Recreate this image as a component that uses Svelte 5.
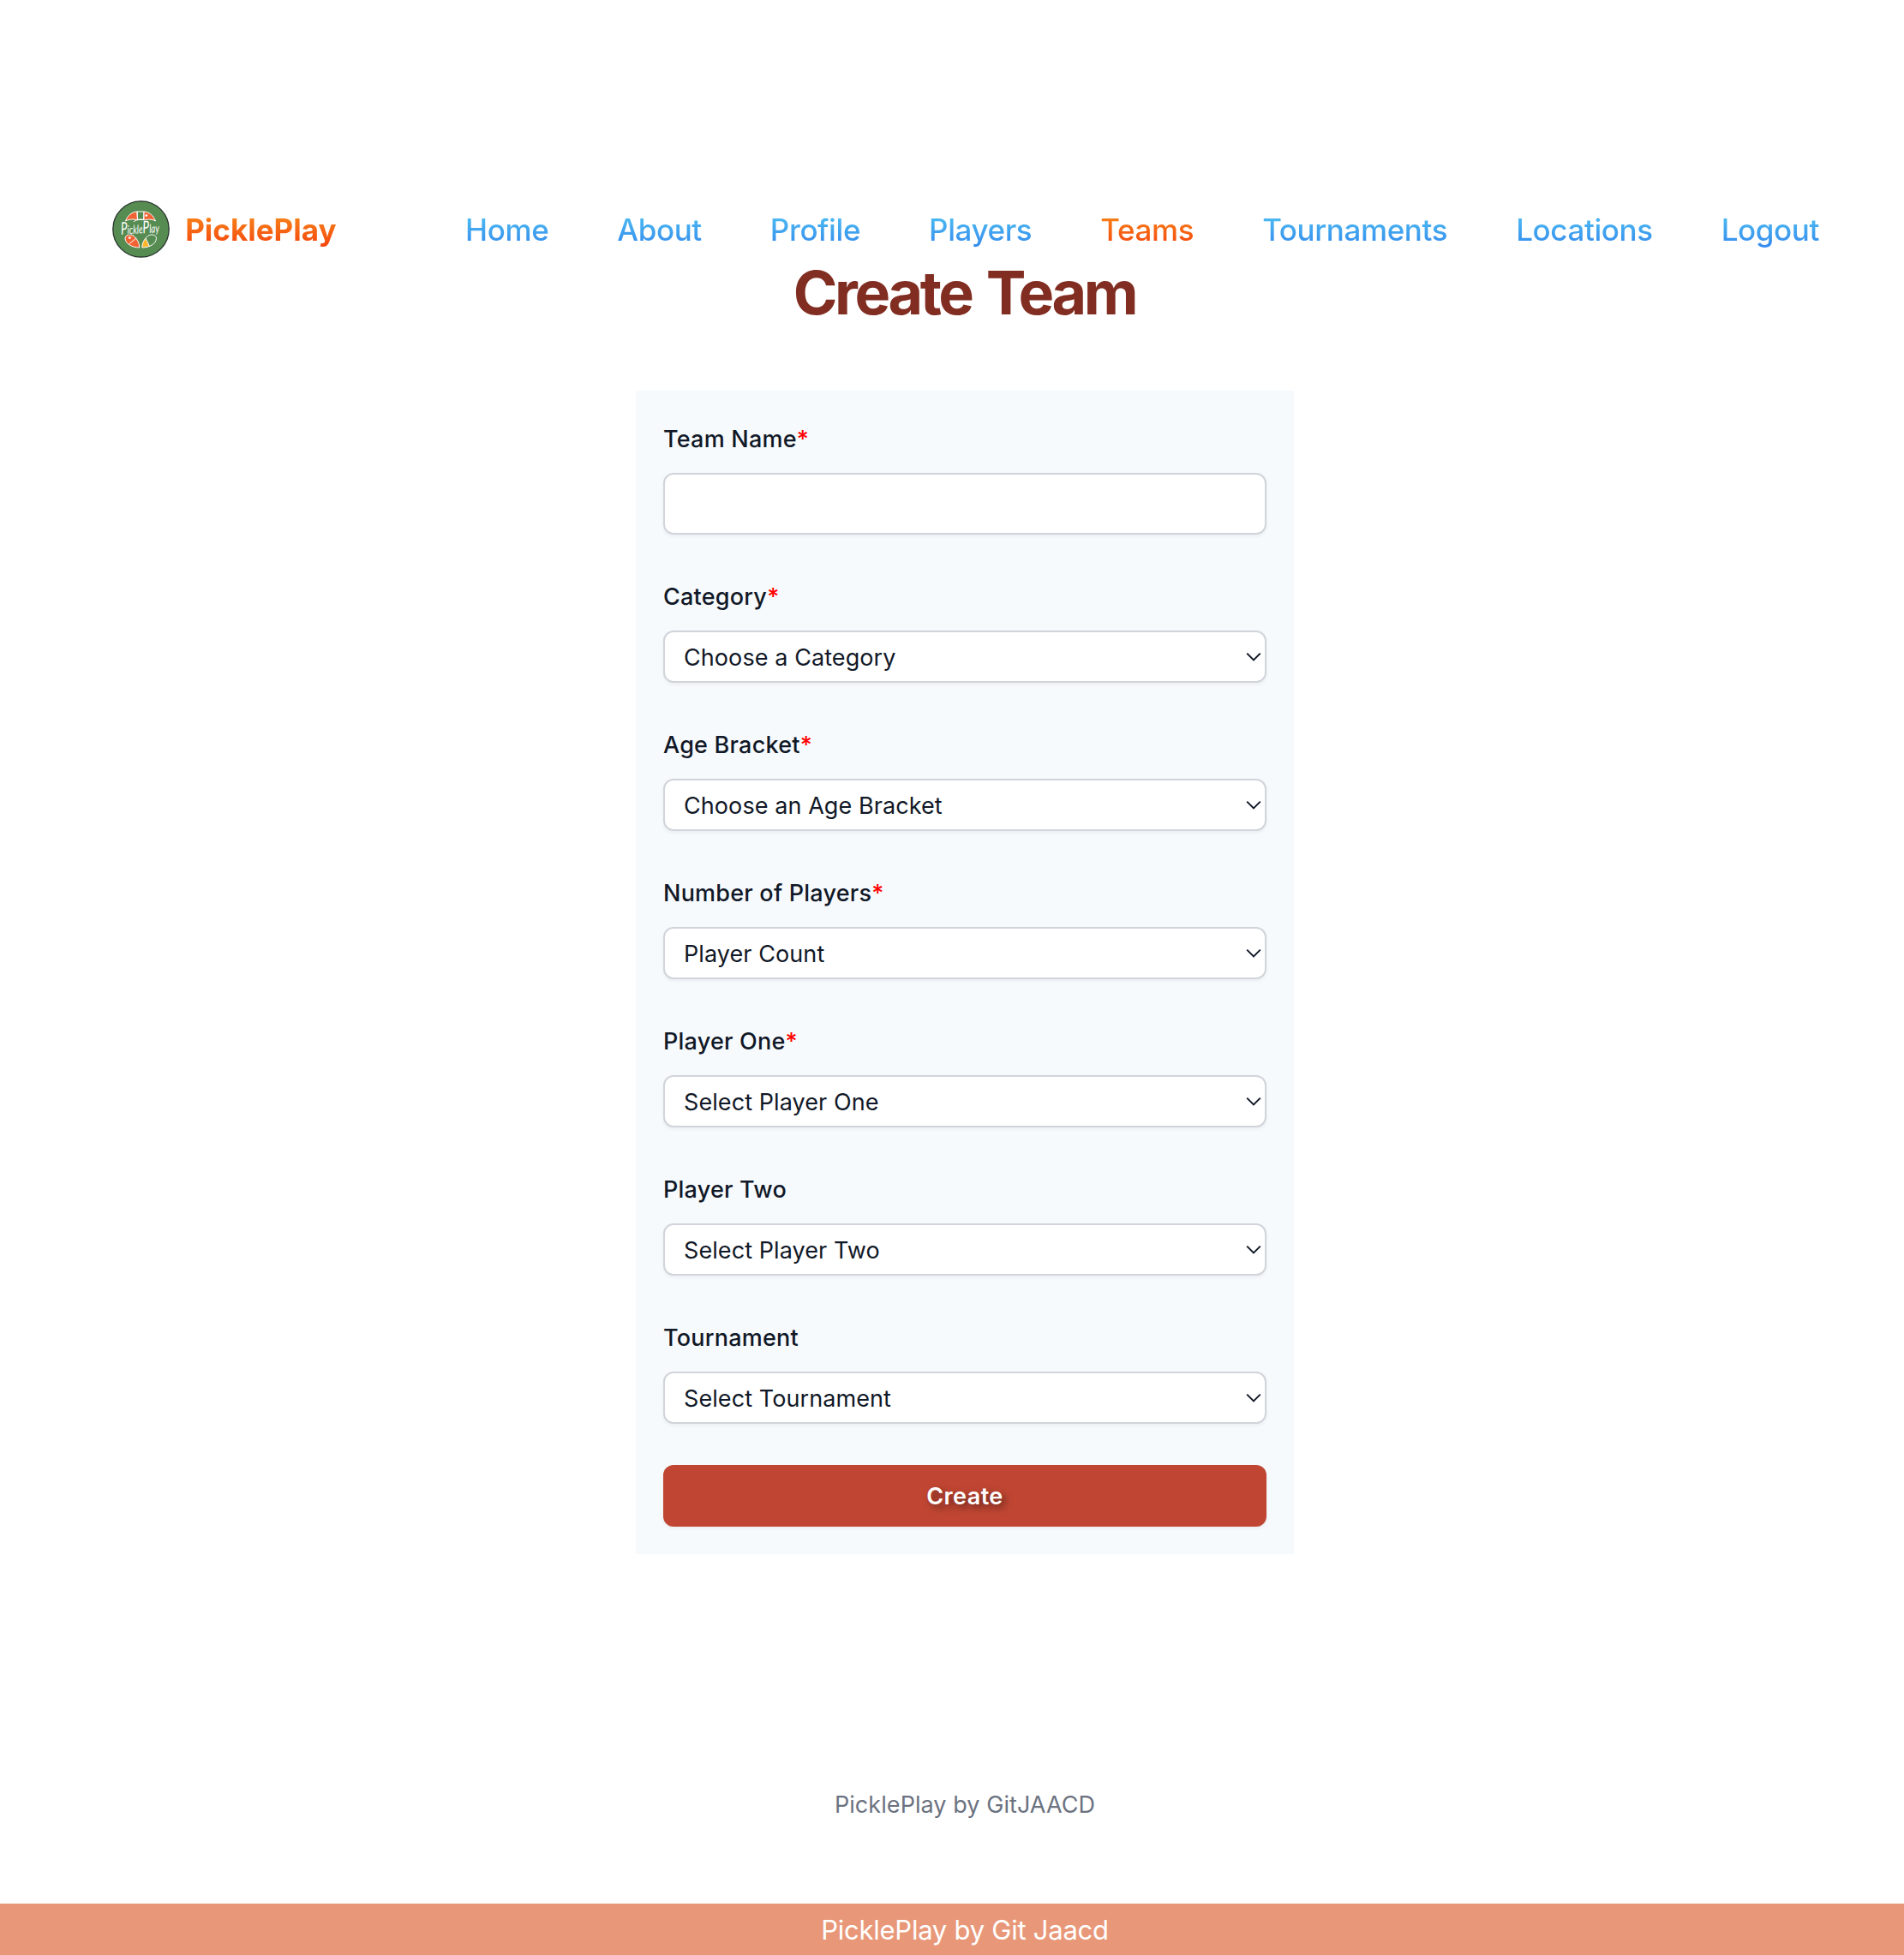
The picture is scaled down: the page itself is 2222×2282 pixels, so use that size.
<script>
  const links = ['Home', 'About', 'Profile', 'Players', 'Teams', 'Tournaments', 'Locations', 'Logout'];
  const fields = [
    { label: 'Category', required: true, value: 'Choose a Category' },
    { label: 'Age Bracket', required: true, value: 'Choose an Age Bracket' },
    { label: 'Number of Players', required: true, value: 'Player Count' },
    { label: 'Player One', required: true, value: 'Select Player One' },
    { label: 'Player Two', required: false, value: 'Select Player Two' },
    { label: 'Tournament', required: false, value: 'Select Tournament' }
  ];
</script>

<div class="page">
  <header>
    <a class="brand" href="#home">
      <svg class="logo" viewBox="0 0 67 67">
        <circle cx="33.5" cy="33.5" r="32.7" fill="#568b52" stroke="#26332a" stroke-width="1.3" />
        <g stroke="#fff" stroke-width="1" stroke-linejoin="round" fill="none">
          <path d="M15.5 24C18 17 23 13.5 29 13L29.5 23C25 21.5 20 21.5 15.5 24Z" fill="#f26334" />
          <path d="M29 13H37L36.5 22.5H29.5Z" />
          <path d="M37 13C43.5 13.5 48 17.5 50.5 24C46 21.5 40 21.5 37 23.5Z" fill="#f26334" />
          <path d="M25 25C29 21 37 21 41 25" />
          <path d="M31.8 55C23 55 15.5 50.5 15 44.5C15 40 21 38.5 25 41.5C29.5 45 31.5 50 31.8 55Z" fill="#f26334" />
          <path d="M19.5 51L28 44" />
          <path d="M34.8 55V50L39 44.5L43.5 53.8Z" fill="#fdb52b" stroke="none" />
          <path d="M34.8 55C35 50 37 45 41.5 41.5C45.5 38.5 51.5 40 51.5 44.5C51 50.5 43.6 55 34.8 55Z" />
          <path d="M39 44L43.5 53.6" />
        </g>
        <circle cx="39.8" cy="17.6" r="1.4" fill="#fff" />
        <circle cx="20.3" cy="43.6" r="1.4" fill="#fff" />
        <text x="10" y="38.5" textLength="45" lengthAdjust="spacingAndGlyphs" transform="rotate(-3 33 36)"><tspan class="cap">P</tspan>ickle<tspan class="cap">P</tspan>lay</text>
      </svg>
      <span class="brand-name">PicklePlay</span>
    </a>
    <nav>
      {#each links as link}
        <a class:active={link === 'Teams'} href="#{link}">{link}</a>
      {/each}
    </nav>
  </header>
  <h1>Create Team</h1>
  <form>
    <div class="field">
      <label for="team">Team Name<b>*</b></label>
      <input id="team" />
    </div>
    {#each fields as f}
      <div class="field">
        <div class="label">{f.label}{#if f.required}<b>*</b>{/if}</div>
        <div class="select">
          <span>{f.value}</span>
          <svg viewBox="0 0 18 12"><path d="M1.2 1.6L9 9.4L16.8 1.6" /></svg>
        </div>
      </div>
    {/each}
    <button type="button">Create</button>
  </form>
  <p class="credit">PicklePlay by GitJAACD</p>
  <footer>PicklePlay by Git Jaacd</footer>
</div>

<style>
  :global(body) { background: #fff; }
  .page { box-sizing: border-box; width: 2222px; height: 2282px; display: flex; flex-direction: column; align-items: stretch; padding-top: 234px; font-family: Inter, "Liberation Sans", sans-serif; color: #111827; font-size: 27px; line-height: 40px; }
  a { text-decoration: none; }
  header { height: 67px; flex: none; display: flex; align-items: center; justify-content: space-between; padding: 0 99px 0 130.7px; }
  .brand { display: flex; align-items: center; gap: 18.5px; }
  .logo { width: 67px; height: 67px; overflow: visible; }
  .logo text { font: italic 14px Lato, sans-serif; fill: #fff; stroke: #568b52; stroke-width: 1.6px; paint-order: stroke; }
  .logo .cap { font-size: 20px; }
  .brand-name, nav a { font-size: 35px; line-height: 56px; font-weight: 500; letter-spacing: -0.4px; color: transparent; background: linear-gradient(#56ccf2, #2f80ed); background-clip: text; -webkit-background-clip: text; }
  .brand-name { font-weight: 700; letter-spacing: 0; }
  .brand-name, nav a.active { background-image: linear-gradient(#f7971e, #f5380b); }
  nav { display: flex; gap: 80px; }
  h1 { margin: 1px 0 0 29px; text-align: center; font-size: 70px; line-height: 80px; font-weight: 700; letter-spacing: -3.4px; word-spacing: 4px; color: #812d21; }
  form { box-sizing: border-box; width: 768px; height: 1358px; margin: 74px 0 0 742px; padding: 32px; background: #f6fafd; display: flex; flex-direction: column; }
  .field { margin-bottom: 48px; }
  label, .label { display: block; height: 40px; margin: 5px 0 19px; font-weight: 500; letter-spacing: 0.22px; }
  b { color: #f00; font-weight: 500; }
  input, .select { box-sizing: border-box; display: flex; width: 704px; height: 72px; border: 2px solid #d1d5db; border-radius: 12px; background: #fff; box-shadow: 0 2px 4px rgba(0, 0, 0, 0.05); }
  .select { height: 61px; align-items: center; justify-content: space-between; padding: 0 4px 0 22px; letter-spacing: 0.08px; }
  .select span { padding-top: 2px; }
  .select svg { width: 18px; height: 12px; }
  .select path { fill: none; stroke: #111827; stroke-width: 2; }
  button { height: 72px; border: 0; border-radius: 12px; padding: 1px 0 0; background: #c04633; color: #fff; font: 600 27px/40px Inter, sans-serif; letter-spacing: 0.4px; text-shadow: 4px 4px 8px rgba(0, 0, 0, 0.5); box-shadow: 0 2px 4px rgba(0, 0, 0, 0.05); }
  .credit { margin: 273px 0 0 30px; text-align: center; color: #6b7280; letter-spacing: 0.06px; }
  footer { box-sizing: border-box; margin-top: auto; height: 60px; padding: 1px 0 0 30px; line-height: 60px; font-size: 31px; letter-spacing: -0.25px; text-align: center; background: #e89879; color: #fff; }
</style>
